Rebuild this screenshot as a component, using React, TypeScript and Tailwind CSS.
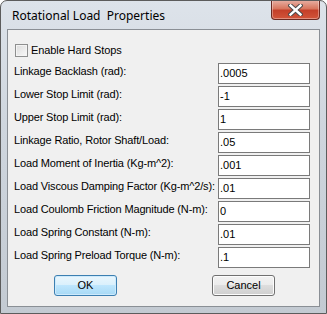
import React from "react";

const rows: [string, string][] = [
  ["Linkage Backlash  (rad):", ".0005"],
  ["Lower Stop Limit (rad):", "-1"],
  ["Upper Stop Limit (rad):", "1"],
  ["Linkage Ratio, Rotor Shaft/Load:", ".05"],
  ["Load Moment of Inertia (Kg-m^2):", ".001"],
  ["Load Viscous Damping Factor (Kg-m^2/s):", ".01"],
  ["Load Coulomb Friction Magnitude (N-m):", "0"],
  ["Load Spring Constant (N-m):", ".01"],
  ["Load Spring Preload Torque (N-m):", ".1"],
];

function CloseButton() {
  return (
    <div className="absolute right-[6px] top-[-1px] flex h-[20px] w-[49px] items-center justify-center rounded-b-[4px] border border-t-0 border-[#6b2a22] bg-[linear-gradient(#e8b2a6,#d8775f_45%,#c4402a_55%,#d2553a)] shadow-[inset_0_0_0_1px_rgba(255,255,255,0.35)]">
      <svg width="15" height="12" viewBox="0 0 15 12">
        <path
          d="M2.5 1.5 L12.5 10.5 M12.5 1.5 L2.5 10.5"
          stroke="#4a4a4a"
          strokeWidth="4.4"
          strokeLinecap="square"
        />
        <path
          d="M2.5 1.5 L12.5 10.5 M12.5 1.5 L2.5 10.5"
          stroke="#ffffff"
          strokeWidth="2.4"
          strokeLinecap="square"
        />
      </svg>
    </div>
  );
}

function Button({ label, primary }: { label: string; primary?: boolean }) {
  return (
    <div
      className={
        "flex h-[21px] w-[63px] items-center justify-center rounded-[3px] border text-[11px] text-black " +
        (primary
          ? "border-[#3c7fb1] bg-[linear-gradient(#eaf6fd,#d9f0fc_50%,#bee6fd_50%,#a7d9f5)] shadow-[inset_0_0_0_1px_#cdeafc]"
          : "border-[#707070] bg-[linear-gradient(#f2f2f2,#ebebeb_50%,#dddddd_50%,#cfcfcf)] shadow-[inset_0_0_0_1px_#fcfcfc]")
      }
    >
      {label}
    </div>
  );
}

export default function App() {
  return (
    <div className="relative flex h-[314px] w-[327px] flex-col overflow-hidden rounded-t-[7px] border border-[#5c5c5c] bg-[linear-gradient(#dde3ea,#cfd6de_40%,#c3cad2)] font-['Liberation_Sans',Arial,sans-serif]">
      {/* title bar */}
      <div className="flex h-[28px] items-center pl-[11px] pt-[2px] font-['Noto_Sans','Open_Sans',sans-serif] text-[12px] text-black">
        Rotational Load&nbsp; Properties
      </div>
      <CloseButton />

      {/* client area */}
      <div className="mx-[6px] flex h-[278px] flex-col border border-[#8a8f95] bg-[#f0f0f0] pl-[6px] pr-[9px] pt-[13px] text-[11px] text-black">
        <div className="flex h-[14px] items-center">
          <div className="ml-[1px] h-[13px] w-[13px] border border-[#8e8f8f] bg-[linear-gradient(135deg,#dcdcdc,#f8f8f8)] shadow-[inset_0_0_0_1px_#f4f4f4]" />
          <span className="ml-[3px] tracking-[-0.1px]">Enable Hard Stops</span>
        </div>

        <div className="mt-[6px] flex flex-col gap-[2px]">
          {rows.map(([label, value]) => (
            <div key={label} className="flex h-[21px] items-start justify-between">
              <span className="pt-[2px] leading-[13px] tracking-[-0.15px] whitespace-nowrap">{label}</span>
              <div className="flex h-[21px] w-[92px] items-center border border-[#7a7a7a] bg-white pl-[1px] leading-none">
                {value}
              </div>
            </div>
          ))}
        </div>

        <div className="mt-[7px] flex">
          <div className="ml-[40px]">
            <Button label="OK" primary />
          </div>
          <div className="ml-[95px]">
            <Button label="Cancel" />
          </div>
        </div>
      </div>
    </div>
  );
}
